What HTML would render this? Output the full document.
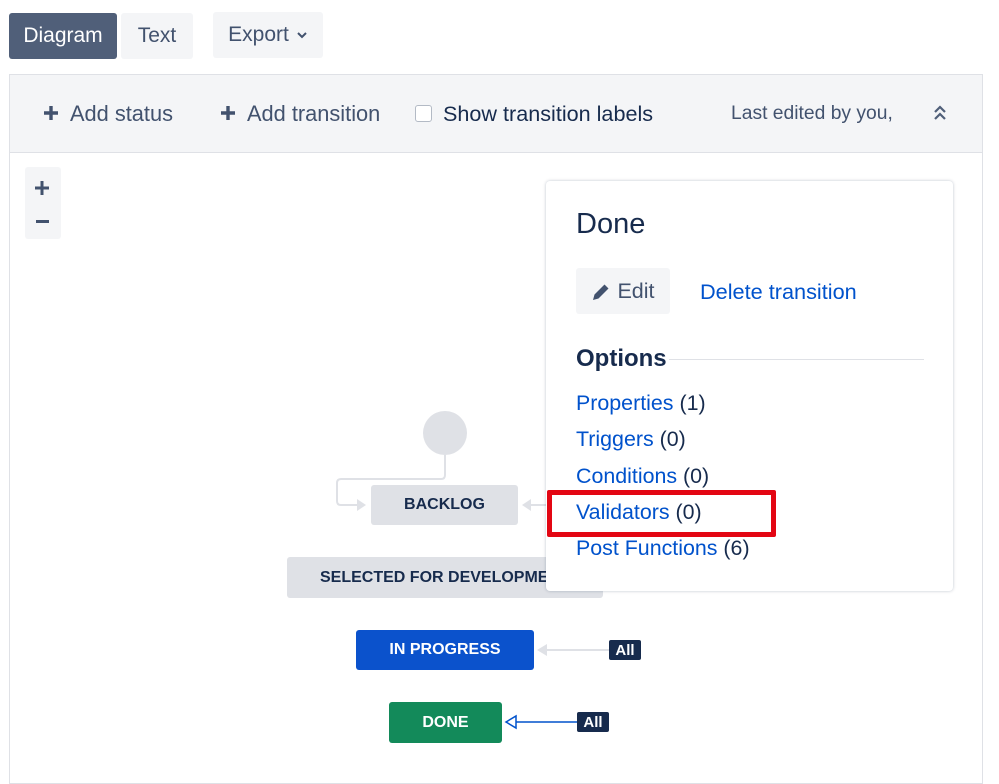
<!DOCTYPE html>
<html><head><style>
body{margin:0;width:999px;height:773px;background:#fff;font-family:"Liberation Sans",sans-serif;position:relative;overflow:hidden;color:#172b4d}
.a{position:absolute}
.btn{position:absolute;border-radius:3px;font-size:21px;display:flex;align-items:center;justify-content:center}
.lnk{color:#0052cc}
.st{position:absolute;border-radius:3px;font-weight:bold;font-size:16px;display:flex;align-items:center;justify-content:center}
.all{position:absolute;background:#172b4d;color:#fff;font-weight:bold;font-size:15px;border-radius:2px;width:32px;height:20px;display:flex;align-items:center;justify-content:center}
</style></head><body>
<div class="btn" style="left:9px;top:13px;width:108px;height:46px;background:#505f79;color:#fff">Diagram</div>
<div class="btn" style="left:121px;top:13px;width:72px;height:46px;background:#f4f5f7;color:#42526e">Text</div>
<div class="btn" style="left:213px;top:12px;width:110px;height:46px;background:#f4f5f7;color:#42526e">Export <svg width="12" height="8" style="margin-left:7px"><path d="M2 2l4 4 4-4" stroke="#42526e" stroke-width="2" fill="none"/></svg></div>

<div class="a" style="left:9px;top:74px;width:974px;height:710px;border:1px solid #dfe1e6;box-sizing:border-box"></div>
<div class="a" style="left:10px;top:75px;width:972px;height:77px;background:#f4f5f7;border-bottom:1px solid #dfe1e6"></div>
<svg class="a" style="left:43px;top:105px" width="16" height="16"><path d="M8 1v14M1 8h14" stroke="#42526e" stroke-width="3.4"/></svg>
<div class="a" style="left:70px;top:101px;font-size:21.8px;color:#42526e">Add status</div>
<svg class="a" style="left:220px;top:105px" width="16" height="16"><path d="M8 1v14M1 8h14" stroke="#42526e" stroke-width="3.4"/></svg>
<div class="a" style="left:247px;top:101px;font-size:21.8px;color:#42526e">Add transition</div>
<div class="a" style="left:415px;top:105px;width:15px;height:15px;border:1px solid #b3bac5;border-radius:3px;background:#fff"></div>
<div class="a" style="left:443px;top:101px;font-size:21.6px;color:#172b4d">Show transition labels</div>
<div class="a" style="left:731px;top:103px;font-size:19.3px;color:#42526e">Last edited by you,</div>
<svg class="a" style="left:933px;top:104px" width="14" height="18"><path d="M2 8l5-5 5 5M2 15l5-5 5 5" stroke="#505f79" stroke-width="2.2" fill="none"/></svg>

<div class="a" style="left:25px;top:167px;width:36px;height:72px;background:#f4f5f7;border-radius:3px"></div>
<svg class="a" style="left:35px;top:181px" width="14" height="14"><path d="M7 0v14M0 7h14" stroke="#42526e" stroke-width="3"/></svg>
<div class="a" style="left:36px;top:220px;width:13px;height:3px;background:#42526e"></div>

<svg class="a" style="left:0;top:0" width="999" height="773">
<circle cx="445" cy="433" r="22" fill="#dfe1e6"/>
<path d="M445 455v20q0 4-4 4h-100q-4 0-4 4v18q0 4 4 4h18" stroke="#dfe1e6" stroke-width="2" fill="none"/>
<path d="M357 499l9 6-9 6z" fill="#dfe1e6"/>
<path d="M530 505h20" stroke="#dfe1e6" stroke-width="2"/><path d="M522 505l9-6v12z" fill="#dfe1e6"/>
<path d="M545 650h64" stroke="#dfe1e6" stroke-width="2"/><path d="M537 650l10-6v12z" fill="#dfe1e6"/>
<path d="M515 722h62" stroke="#0052cc" stroke-width="1.5"/><path d="M506 722l10-6v12z" fill="#fff" stroke="#0052cc" stroke-width="1.5"/>
</svg>
<div class="st" style="left:371px;top:485px;width:147px;height:40px;background:#dfe1e6;color:#172b4d">BACKLOG</div>
<div class="st" style="left:287px;top:557px;width:316px;height:41px;background:#dfe1e6;color:#172b4d;justify-content:flex-start;padding-left:33px;box-sizing:border-box">SELECTED FOR DEVELOPMENT</div>
<div class="st" style="left:356px;top:630px;width:178px;height:40px;background:#0b52cc;color:#fff">IN PROGRESS</div>
<div class="st" style="left:389px;top:702px;width:113px;height:41px;background:#138a5a;color:#fff">DONE</div>
<div class="all" style="left:609px;top:640px">All</div>
<div class="all" style="left:577px;top:712px">All</div>

<div class="a" style="left:546px;top:181px;width:407px;height:410px;background:#fff;border-radius:4px;box-shadow:0 0 3px rgba(9,30,66,.25)"></div>
<div class="a" style="left:576px;top:208px;font-size:29px;color:#172b4d">Done</div>
<div class="btn" style="left:576px;top:268px;width:94px;height:46px;background:#f4f5f7;color:#42526e;font-size:21.5px">
<svg width="20" height="20" style="margin-right:6px"><path d="M2 19l1.5-5.5 10-10 4 4-10 10z" fill="#42526e"/></svg>Edit</div>
<div class="a lnk" style="left:700px;top:279px;font-size:21.7px">Delete transition</div>
<div class="a" style="left:576px;top:345px;font-size:24px;font-weight:bold">Options</div>
<div class="a" style="left:669px;top:359px;width:255px;height:1px;background:#dfe1e6"></div>
<div class="a" style="left:576px;top:391px;font-size:21.4px;line-height:24px">
<div style="height:36.3px"><span class="lnk">Properties</span> (1)</div>
<div style="height:36.3px"><span class="lnk">Triggers</span> (0)</div>
<div style="height:36.3px"><span class="lnk">Conditions</span> (0)</div>
<div style="height:36.3px"><span class="lnk">Validators</span> (0)</div>
<div style="height:36.3px"><span class="lnk">Post Functions</span> (6)</div>
</div>
<div class="a" style="left:547px;top:490px;width:229px;height:47px;border:5px solid #e30613;box-sizing:border-box;border-radius:2px"></div>
</body></html>
